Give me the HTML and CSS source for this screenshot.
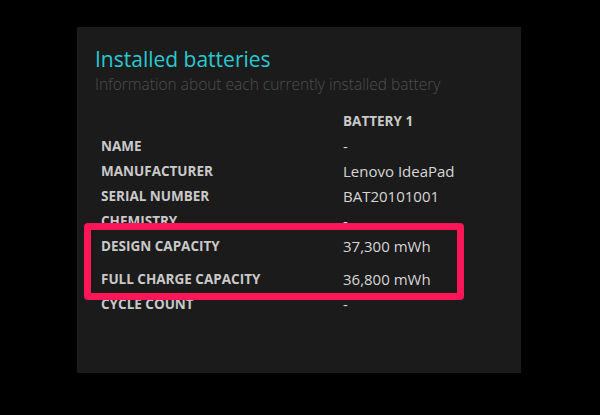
FILE: index.html
```html
<!DOCTYPE html>
<html>
<head>
<meta charset="utf-8">
<link rel="stylesheet" href="styles.css">
</head>
<body>
<div class="page">
  <section class="panel">
    <h1 class="title">Installed batteries</h1>
    <p class="subtitle">Information about each currently installed battery</p>
    <div class="table">
      <div class="row head"><span class="label"></span><span class="value">BATTERY 1</span></div>
      <div class="row"><span class="label">NAME</span><span class="value">-</span></div>
      <div class="row"><span class="label">MANUFACTURER</span><span class="value">Lenovo IdeaPad</span></div>
      <div class="row"><span class="label">SERIAL NUMBER</span><span class="value">BAT20101001</span></div>
      <div class="row"><span class="label">CHEMISTRY</span><span class="value">-</span></div>
      <div class="highlight">
        <div class="row hrow"><span class="label">DESIGN CAPACITY</span><span class="value">37,300 mWh</span></div>
        <div class="row hrow"><span class="label">FULL CHARGE CAPACITY</span><span class="value">36,800 mWh</span></div>
      </div>
      <div class="row"><span class="label">CYCLE COUNT</span><span class="value">-</span></div>
    </div>
  </section>
</div>
</body>
</html>
```

FILE: styles.css
```css
html, body {
  margin: 0;
  padding: 0;
  background: #000;
}
body {
  width: 600px;
  height: 415px;
  overflow: hidden;
  font-family: "Open Sans", "Noto Sans", sans-serif;
}
.page {
  padding: 27px 0 0 77px;
}
.panel {
  width: 444px;
  height: 346px;
  background: #1b1b1b;
  box-sizing: border-box;
  padding: 19px 0 0 18px;
}
.title {
  margin: 0;
  font-size: 21px;
  line-height: 27px;
  font-weight: 400;
  color: #2ac8d2;
}
.subtitle {
  margin: 1px 0 0;
  font-size: 15.5px;
  line-height: 20px;
  font-weight: 300;
  color: #4f4f4f;
}
.table {
  margin-top: 14px;
  padding-left: 6px;
  display: flex;
  flex-direction: column;
}
.row {
  display: flex;
  height: 25px;
  align-items: center;
}
.label {
  width: 242px;
  font-size: 13.5px;
  font-weight: 700;
  color: #c9c9c9;
}
.value {
  font-size: 15px;
  color: #d6d6d6;
}
.head .value {
  font-size: 13.5px;
  font-weight: 700;
  color: #c9c9c9;
}
.highlight {
  position: relative;
  z-index: 1;
  margin: -10px 0 -9px -17px;
  width: 380px;
  height: 77px;
  box-sizing: border-box;
  border: 7px solid #ff1659;
  border-radius: 4px;
  background: #1b1b1b;
  padding: 1px 0 0 10px;
  display: flex;
  flex-direction: column;
  gap: 4px;
}
.hrow {
  height: 30px;
}
```
